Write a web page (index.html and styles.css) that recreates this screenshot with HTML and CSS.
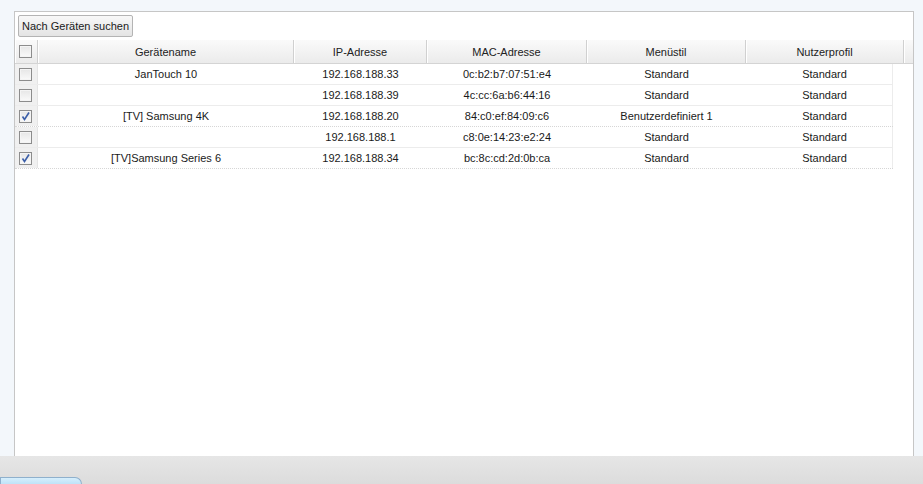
FILE: index.html
```html
<!DOCTYPE html>
<html>
<head>
<meta charset="utf-8">
<link rel="stylesheet" href="styles.css">
</head>
<body>
<div class="page">
  <div class="main">
    <div class="panel">
      <div class="toolbar">
        <button class="btn">Nach Geräten suchen</button>
      </div>
      <div class="grid">
        <div class="head">
          <div class="hc chk"><span class="cb"></span></div>
          <div class="hc c1">Gerätename</div>
          <div class="hc c2">IP-Adresse</div>
          <div class="hc c3">MAC-Adresse</div>
          <div class="hc c4">Menüstil</div>
          <div class="hc c5">Nutzerprofil</div>
          <div class="hc rest"></div>
        </div>
        <div class="body">
          <div class="row">
            <div class="dc chk"><span class="cb"></span></div>
            <div class="dc c1">JanTouch 10</div>
            <div class="dc c2">192.168.188.33</div>
            <div class="dc c3">0c:b2:b7:07:51:e4</div>
            <div class="dc c4">Standard</div>
            <div class="dc c5">Standard</div>
          </div>
          <div class="row">
            <div class="dc chk"><span class="cb"></span></div>
            <div class="dc c1"></div>
            <div class="dc c2">192.168.188.39</div>
            <div class="dc c3">4c:cc:6a:b6:44:16</div>
            <div class="dc c4">Standard</div>
            <div class="dc c5">Standard</div>
          </div>
          <div class="row sel">
            <div class="dc chk"><span class="cb on"><svg viewBox="0 0 11 11" width="11" height="11"><path d="M2.5 5.5 L4.5 8.5 L9 1.5" fill="none" stroke="#3b5ea8" stroke-width="1.6"/></svg></span></div>
            <div class="dc c1">[TV] Samsung 4K</div>
            <div class="dc c2">192.168.188.20</div>
            <div class="dc c3">84:c0:ef:84:09:c6</div>
            <div class="dc c4">Benutzerdefiniert 1</div>
            <div class="dc c5">Standard</div>
          </div>
          <div class="row">
            <div class="dc chk"><span class="cb"></span></div>
            <div class="dc c1"></div>
            <div class="dc c2">192.168.188.1</div>
            <div class="dc c3">c8:0e:14:23:e2:24</div>
            <div class="dc c4">Standard</div>
            <div class="dc c5">Standard</div>
          </div>
          <div class="row sel">
            <div class="dc chk"><span class="cb on"><svg viewBox="0 0 11 11" width="11" height="11"><path d="M2.5 5.5 L4.5 8.5 L9 1.5" fill="none" stroke="#3b5ea8" stroke-width="1.6"/></svg></span></div>
            <div class="dc c1">[TV]Samsung Series 6</div>
            <div class="dc c2">192.168.188.34</div>
            <div class="dc c3">bc:8c:cd:2d:0b:ca</div>
            <div class="dc c4">Standard</div>
            <div class="dc c5">Standard</div>
          </div>
        </div>
      </div>
    </div>
  </div>
  <div class="footer">
    <div class="tab"></div>
  </div>
</div>
</body>
</html>
```
FILE: styles.css
```css
html, body {
  margin: 0;
  padding: 0;
  height: 100%;
}
body {
  background: #f3f7fb;
  font-family: "Liberation Sans", Arial, sans-serif;
  font-size: 11px;
  color: #1a1a1a;
  overflow: hidden;
}
.page {
  display: flex;
  flex-direction: column;
  height: 484px;
}
.main {
  flex: 1;
  display: flex;
  padding: 11px 9px 0 14px;
  min-height: 0;
}
.panel {
  flex: 1;
  background: #ffffff;
  border: 1px solid #c6c6c6;
  border-bottom: none;
  display: flex;
  flex-direction: column;
}
.toolbar {
  padding: 3px 0 0 3px;
  height: 22px;
}
.btn {
  height: 22px;
  margin: 0;
  padding: 0 3px;
  font-family: "Liberation Sans", Arial, sans-serif;
  font-size: 11px;
  color: #1a1a1a;
  border: 1px solid #b4b4b4;
  border-radius: 2px;
  background: linear-gradient(#f8f8f8, #e4e4e4);
}
.grid {
  margin-top: 3px;
}
.head {
  display: flex;
  height: 23px;
  background: linear-gradient(#fafafa, #ebebeb);
  border-bottom: 1px solid #d4d4d4;
}
.hc, .dc {
  box-sizing: border-box;
  flex: none;
  display: flex;
  align-items: center;
  justify-content: center;
}
.hc {
  border-right: 1px solid #d0d0d0;
  box-shadow: inset 1px 0 0 #ffffff;
  color: #222;
}
.hc.rest {
  flex: 1;
  border-right: none;
}
.chk { width: 23px; }
.c1 { width: 256px; }
.c2 { width: 133px; }
.c3 { width: 160px; }
.c4 { width: 159px; }
.c5 { width: 158px; }
.body {
  width: 878px;
}
.row {
  display: flex;
  height: 20px;
  border-bottom: 1px solid #ececec;
}
.row.sel {
  border-bottom: 1px dotted #d6d6d6;
}
.dc {
  color: #1a1a1a;
}
.dc.chk {
  background: #f0f0f0;
  border-right: 1px solid #e4e4e4;
}
.row .dc.c5 {
  width: 147px;
  padding-left: 11px;
  border-right: 1px solid #ececec;
}
.cb {
  width: 11px;
  height: 11px;
  border: 1px solid #8c8c8c;
  background: linear-gradient(#e6e6e6, #fafafa);
  box-shadow: inset 0 0 0 1px #f4f4f4;
  display: block;
}
.hc.chk .cb, .dc.chk .cb {
  margin-left: -1px;
}
.cb svg {
  display: block;
}
.footer {
  height: 28px;
  flex: none;
  background: linear-gradient(#e6e6e6, #dcdcdc);
  display: flex;
  align-items: flex-end;
}
.tab {
  width: 80px;
  height: 6px;
  border: 1px solid #8fb0cc;
  border-bottom: none;
  border-top-right-radius: 7px;
  background: linear-gradient(#d6eefc, #bfe3f8);
}
```
